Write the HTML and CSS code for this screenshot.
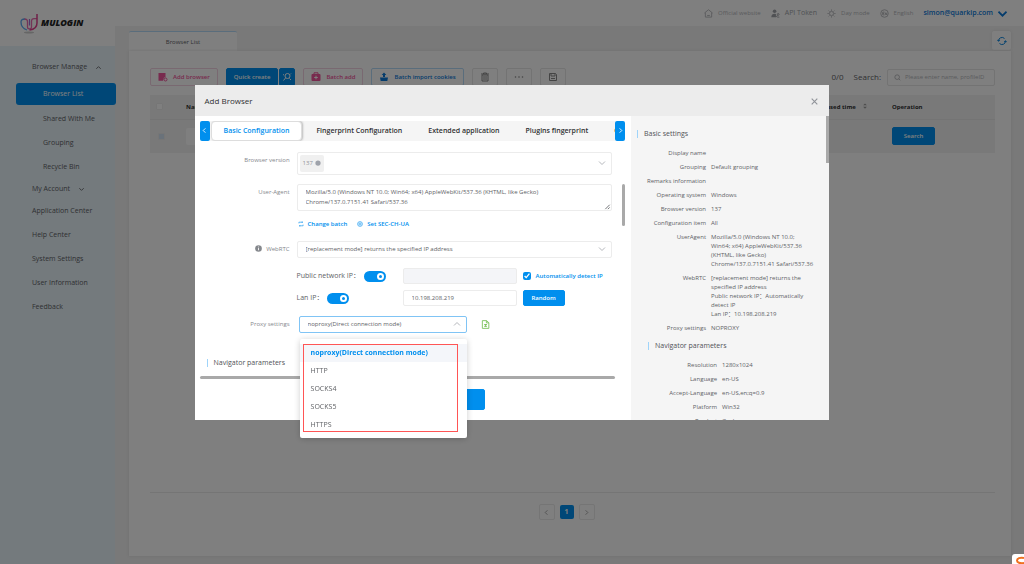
FILE: index.html
```html
<!DOCTYPE html>
<html lang="en">
<head>
    <meta charset="UTF-8">
    <meta name="viewport" content="width=device-width, initial-scale=1.0">
    <title>MuLogin - Browser List</title>
    <link rel="stylesheet" href="styles.css">
</head>
<body>

<div class="app">
    <!-- Sidebar -->
    <aside class="sidebar">
        <div class="logo">
            <svg width="18" height="21" viewBox="0 0 18 21" fill="none">
                <ellipse cx="9" cy="19.500" rx="5" ry="1" fill="#ccc" stroke="none"/>
                <path d="M5 6C2 6 1 7 1 9c0 4 3 7 6 8" stroke="#5aa9f5" stroke-width="1.300"/>
                <path d="M4.500 6c2.300 0 3 1 3 3v5c0 2.500 4 2.500 4 0V8.500c0-2 1-2.800 2.500-2.800h3" stroke="#e868ae" stroke-width="1.300"/>
                <path d="M17 1v9c0 4-3 6.500-7.500 7" stroke="#e0408f" stroke-width="1.500"/>
                <path d="M9.500 6v6.500" stroke="#a06bd8" stroke-width="1.200"/>
            </svg>
            <span>MULOGIN</span>
        </div>
        <nav class="menu">
            <a href="#" class="menu-item">Browser Manage
                <svg class="caret" viewBox="0 0 8 8"><path d="M1.500 5.500 4 3l2.500 2.500"/></svg>
            </a>
            <div class="submenu">
                <a href="#" class="menu-item active">Browser List</a>
                <a href="#" class="menu-item">Shared With Me</a>
                <a href="#" class="menu-item">Grouping</a>
                <a href="#" class="menu-item">Recycle Bin</a>
            </div>
            <a href="#" class="menu-item short">My Account
                <svg class="caret" viewBox="0 0 8 8"><path d="M1.500 2.500 4 5l2.500-2.500"/></svg>
            </a>
            <a href="#" class="menu-item">Application Center</a>
            <a href="#" class="menu-item">Help Center</a>
            <a href="#" class="menu-item">System Settings</a>
            <a href="#" class="menu-item">User Information</a>
            <a href="#" class="menu-item">Feedback</a>
        </nav>
    </aside>

    <div class="main">
        <!-- Top bar -->
        <header class="topbar">
            <a href="#"><svg viewBox="0 0 10 10"><path d="M.500 4.500 5 .800l4.500 3.700M1.500 4v5h7V4M3.500 7.200h3"/></svg>Official website</a>
            <a href="#" class="token"><svg viewBox="0 0 10 10"><g fill="currentColor" stroke="none"><circle cx="4" cy="2.500" r="2"/><path d="M.300 9.200C.300 6.500 2 5.300 4 5.300l1.500.300v3.600z"/></g><circle cx="8" cy="6" r="1"/><path d="M7.300 6.800 5.800 9M6.800 9h2.500"/></svg>API Token</a>
            <a href="#"><svg viewBox="0 0 10 10"><circle cx="5" cy="5" r="2.300"/><path d="M5 .500v1.500M5 8v1.500M.500 5H2M8 5h1.500M1.800 1.800l1 1M7.200 7.200l1 1M1.800 8.200l1-1M7.200 2.800l1-1"/></svg>Day mode</a>
            <a href="#"><svg viewBox="0 0 10 10"><circle cx="5" cy="5" r="4.200"/><path d="M3 3.500h2M3 5h1.500M3 6.500h2M3 3.500v3M6 6.500V4.200l1.500 2.300V4.200"/></svg>English</a>
            <a href="#" class="account">simon@quarkip.com<svg viewBox="0 0 10 10"><path d="M.500 3 5 7.500 9.500 3"/></svg></a>
        </header>

        <div class="page-tabs">
            <a href="#" class="page-tab">Browser List</a>
            <button class="refresh" aria-label="Refresh"><svg viewBox="0 0 10 10"><path d="M1.500 5a3.500 3.500 0 0 1 6-2.500M8.500 5a3.500 3.500 0 0 1-6 2.500M.300 3.800 1.500 5.300 2.900 4M9.700 6.200 8.500 4.700 7.100 6"/></svg></button>
        </div>

        <main class="panel">
            <!-- Toolbar -->
            <div class="toolbar">
                <button class="btn pink"><svg viewBox="0 0 10 10"><path fill="currentColor" stroke="none" d="M.500 1h7v4.500H6L5 8.800H.500z"/><circle cx="7.500" cy="7.500" r="1.500"/></svg>Add browser</button>
                <div class="btn-group">
                    <button class="btn blue">Quick create</button>
                    <button class="btn blue square" aria-label="Quick search"><svg viewBox="0 0 10 10"><circle cx="5.500" cy="4" r="2.500"/><path d="M3.500 6 1.500 8.500M7.500 6.500 9 8M1 2.500l1 .500M9 1.500l-1 1"/></svg></button>
                </div>
                <button class="btn pink"><svg viewBox="0 0 10 10"><path d="M3 2V.800h4V2"/><rect x=".500" y="2" width="9" height="7" rx="1" fill="currentColor" stroke="none"/><path d="M5 3.700v3.600M3.200 5.500h3.600" stroke="#fff"/></svg>Batch add</button>
                <button class="btn cookies"><svg viewBox="0 0 10 10"><g fill="currentColor" stroke="none"><path d="M1 5.500h8l-.700 3.500H1.700z"/><path d="M5 .500 7.300 3H6v2H4V3H2.700z"/></g></svg>Batch import cookies</button>
                <button class="btn icon-only" aria-label="Delete"><svg viewBox="0 0 10 10"><path d="M1 2h8M3.500 2V1h3v1M2 3v6h6V3zM4 4v4M6 4v4"/></svg></button>
                <button class="btn icon-only" aria-label="More"><svg viewBox="0 0 10 10"><g fill="currentColor" stroke="none"><circle cx="1.500" cy="5" r=".800"/><circle cx="5" cy="5" r=".800"/><circle cx="8.500" cy="5" r=".800"/></g></svg></button>
                <button class="btn icon-only" aria-label="Save"><svg viewBox="0 0 10 10"><path d="M1.500 1.500h6l1 1v6h-7zM3 1.500V4h4V1.500M3 6.500h4"/></svg></button>
                <div class="search">
                    <span>0/0</span>
                    <label for="search">Search:</label>
                    <div class="search-box">
                        <svg viewBox="0 0 10 10"><circle cx="4.500" cy="4.500" r="3.300"/><path d="m7 7 2 2"/></svg>
                        <input type="text" id="search" placeholder="Please enter name, profileID">
                    </div>
                </div>
            </div>

            <!-- Browser table -->
            <div class="table-wrap">
                <table>
                    <thead>
                        <tr>
                            <th class="col-check"><input type="checkbox" class="check" aria-label="Select all"></th>
                            <th>Name</th>
                            <th class="col-time">Last used time
                                <svg viewBox="0 0 8 8"><path d="M1.500 3 4 .500 6.500 3zM1.500 5 4 7.500 6.500 5z"/></svg>
                            </th>
                            <th class="col-op">Operation</th>
                        </tr>
                    </thead>
                    <tbody>
                        <tr>
                            <td><input type="checkbox" class="check tinted" aria-label="Select row"></td>
                            <td><input type="text" class="name-filter" aria-label="Name"></td>
                            <td></td>
                            <td><button class="btn blue row-search">Search</button></td>
                        </tr>
                    </tbody>
                </table>
            </div>

            <div class="pagination">
                <button aria-label="Previous"><svg viewBox="0 0 8 8"><path d="M5 1.500 2.500 4 5 6.500"/></svg></button>
                <button class="current">1</button>
                <button aria-label="Next"><svg viewBox="0 0 8 8"><path d="M3 1.500 5.500 4 3 6.500"/></svg></button>
            </div>
        </main>
    </div>
</div>

<!-- Add Browser dialog -->
<div class="overlay">
    <div class="dialog" role="dialog" aria-label="Add Browser">
        <div class="dialog-header">
            <h2>Add Browser</h2>
            <button class="close" aria-label="Close"><svg viewBox="0 0 8 8"><path d="m1.500 1.500 5 5M6.500 1.500l-5 5"/></svg></button>
        </div>

        <div class="dialog-body">
            <section class="config">
                <div class="config-tabs">
                    <button class="arrow" aria-label="Previous tab"><svg viewBox="0 0 8 8"><path d="M5 1.500 2.500 4 5 6.500"/></svg></button>
                    <div class="tab-list">
                        <button class="tab active">Basic Configuration</button>
                        <button class="tab">Fingerprint Configuration</button>
                        <button class="tab">Extended application</button>
                        <button class="tab">Plugins fingerprint</button>
                        <button class="tab">Other</button>
                    </div>
                    <button class="arrow" aria-label="Next tab"><svg viewBox="0 0 8 8"><path d="M3 1.500 5.500 4 3 6.500"/></svg></button>
                </div>

                <form class="form">
                    <div class="row">
                        <label class="row-label" for="version">Browser version</label>
                        <div class="field tall">
                            <span class="tag">137 <svg viewBox="0 0 8 8"><circle cx="4" cy="4" r="3.500"/></svg></span>
                            <select id="version"><option></option></select>
                            <svg class="chevron" viewBox="0 0 8 8"><path d="M1 2.500 4 5.500l3-3"/></svg>
                        </div>
                    </div>
                    <div class="row">
                        <label class="row-label" for="ua">User-Agent</label>
                        <div class="field area">
                            <textarea id="ua" rows="2">Mozilla/5.0 (Windows NT 10.0; Win64; x64) AppleWebKit/537.36 (KHTML, like Gecko) Chrome/137.0.7151.41 Safari/537.36</textarea>
                            <svg class="grip" viewBox="0 0 8 8"><path d="m1.500 7 5-5M4.500 7l2-2"/></svg>
                        </div>
                    </div>
                    <div class="links">
                        <a href="#"><svg viewBox="0 0 10 10"><path d="M1.500 4V2h6.500M8.500 6v2H2M7 .800v2.500M3 6.700v2.500"/></svg>Change batch</a>
                        <a href="#"><svg viewBox="0 0 10 10"><circle cx="5" cy="5" r="4"/><circle cx="5" cy="5" r="1.800"/></svg>Set SEC-CH-UA</a>
                    </div>
                    <div class="row webrtc">
                        <label class="row-label" for="webrtc"><svg viewBox="0 0 8 8"><circle cx="4" cy="4" r="3.800" fill="#85888d" stroke="none"/><path d="M4 3.500V6M4 1.800v.900" stroke="#fff"/></svg>WebRTC</label>
                        <div class="field">
                            <select id="webrtc"><option>[replacement mode] returns the specified IP address</option></select>
                            <svg class="chevron" viewBox="0 0 8 8"><path d="M1 2.500 4 5.500l3-3"/></svg>
                        </div>
                    </div>
                    <div class="ip-row">
                        <label class="switch-label">Public network IP：<input type="checkbox" class="switch" checked></label>
                        <input type="text" class="ip-input" aria-label="Public network IP" disabled>
                        <label class="auto"><input type="checkbox" checked>Automatically detect IP</label>
                    </div>
                    <div class="ip-row">
                        <label class="switch-label">Lan IP：<input type="checkbox" class="switch" checked></label>
                        <input type="text" class="ip-input" aria-label="Lan IP" value="10.198.208.219">
                        <button type="button" class="btn blue random">Random</button>
                    </div>
                    <div class="row proxy">
                        <label class="row-label" for="proxy">Proxy settings</label>
                        <div class="field open">
                            <select id="proxy"><option>noproxy(Direct connection mode)</option></select>
                            <svg class="chevron" viewBox="0 0 8 8"><path d="M1 5.500 4 2.500l3 3"/></svg>
                            <div class="dropdown">
                                <ul role="listbox">
                                    <li role="option" aria-selected="true" class="selected">noproxy(Direct connection mode)</li>
                                    <li role="option">HTTP</li>
                                    <li role="option">SOCKS4</li>
                                    <li role="option">SOCKS5</li>
                                    <li role="option">HTTPS</li>
                                </ul>
                                <div class="highlight"></div>
                            </div>
                        </div>
                        <svg class="doc" viewBox="0 0 10 10"><path d="M1.500.700h4.700L8.700 3v6.300H1.500zM6 .700V3.200h2.700M3.500 5h3.200M3.500 7h3.200M5.100 4.500v3"/></svg>
                    </div>
                    <h3 class="section-title">Navigator parameters</h3>
                    <div class="v-thumb"></div>
                </form>
                <div class="h-thumb"></div>
                <div class="actions">
                    <button class="btn blue confirm" aria-label="Confirm"></button>
                </div>
            </section>

            <!-- Summary -->
            <section class="summary">
                <h3 class="section-title">Basic settings</h3>
                <dl>
                    <dt>Display name</dt><dd></dd>
                    <dt>Grouping</dt><dd>Default grouping</dd>
                    <dt>Remarks information</dt><dd></dd>
                    <dt>Operating system</dt><dd>Windows</dd>
                    <dt>Browser version</dt><dd>137</dd>
                    <dt>Configuration item</dt><dd>All</dd>
                    <dt>UserAgent</dt><dd>Mozilla/5.0 (Windows NT 10.0; Win64; x64) AppleWebKit/537.36 (KHTML, like Gecko) Chrome/137.0.7151.41 Safari/537.36</dd>
                    <dt>WebRTC</dt><dd>[replacement mode] returns the specified IP address<br>Public network IP：Automatically detect IP<br>Lan IP：10.198.208.219</dd>
                    <dt>Proxy settings</dt><dd>NOPROXY</dd>
                </dl>
                <div class="nested">
                    <h3 class="section-title">Navigator parameters</h3>
                    <dl>
                        <dt>Resolution</dt><dd>1280x1024</dd>
                        <dt>Language</dt><dd>en-US</dd>
                        <dt>Accept-Language</dt><dd>en-US,en;q=0.9</dd>
                        <dt>Platform</dt><dd>Win32</dd>
                        <dt>Product</dt><dd>Gecko</dd>
                    </dl>
                </div>
                <div class="side-thumb"></div>
            </section>
        </div>
    </div>
</div>

<div class="float-badge">
    <svg viewBox="0 0 12 10"><path d="M12 4C8 3 5 4.500 5 6.500s3 3 7 2.500" fill="none" stroke="#f07020" stroke-width="2"/></svg>
</div>

</body>
</html>
```
FILE: styles.css
```css
/* Base */
*,
*::before {
    box-sizing: border-box;
}

body {
    font-family: "Open Sans", "Noto Sans CJK SC", sans-serif;
    font-size: 7px;
    line-height: 10px;
    margin: 0;
    color: #606266;
    background: #f2f2f2;
}

button, input, select, textarea {
    font: inherit;
    color: inherit;
    margin: 0;
    padding: 0;
    border: none;
    background: none;
    outline: none;
}

a {
    color: inherit;
    text-decoration: none;
}

h2, h3, dl, dd, ul {
    margin: 0;
    padding: 0;
    font-weight: 400;
}

svg {
    flex: none;
    width: 10px;
    height: 10px;
    fill: none;
    stroke: currentColor;
}

.app {
    display: flex;
    min-height: 100vh;
}

/* Sidebar */
.sidebar {
    flex: 0 0 115px;
    background: #e9f4fb;
}

.logo {
    display: flex;
    align-items: center;
    gap: 3px;
    height: 46px;
    padding-left: 20px;
    background: #fff;
    color: #222;
    font-size: 9px;
    font-weight: 800;
    font-style: italic;
}

.logo svg {
    width: 18px;
    height: 21px;
}

.menu {
    padding-top: 9px;
}

.menu-item {
    display: flex;
    align-items: center;
    gap: 8px;
    height: 24px;
    padding-left: 32px;
}

.menu-item.short {
    height: 20px;
}

.submenu {
    padding-top: 4px;
}

.submenu .menu-item {
    padding-left: 43px;
}

.submenu .menu-item.active {
    height: 22px;
    margin: 0 -1px 2px 16px;
    padding-left: 27px;
    border-radius: 3px;
    background: #008fee;
    color: #fff;
}

.caret {
    width: 7px;
    height: 7px;
}

/* Main column */
.main {
    flex: 1;
    display: flex;
    flex-direction: column;
    min-width: 0;
}

.topbar {
    display: flex;
    align-items: center;
    justify-content: flex-end;
    gap: 10px;
    height: 26px;
    padding-right: 17px;
    background: #fff;
    color: #b4b6ba;
    font-size: 6px;
}

.topbar a {
    display: flex;
    align-items: center;
    gap: 5px;
}

.topbar svg {
    width: 9px;
    height: 9px;
}

.topbar .token {
    color: #a0a3a8;
    font-size: 7px;
}

.topbar .account {
    color: #0a78d8;
    font-size: 7px;
    font-weight: 600;
}

.account svg {
    stroke-width: 2;
}

.page-tabs {
    display: flex;
    justify-content: space-between;
    height: 25px;
    padding: 5px 13px 0 14px;
}

.page-tab {
    display: flex;
    align-items: center;
    justify-content: center;
    width: 108px;
    border-top: 1px solid #b5dbf8;
    border-radius: 2px 2px 0 0;
    background: #fff;
    font-size: 6px;
}

.refresh {
    display: flex;
    align-items: center;
    justify-content: center;
    width: 19px;
    height: 19px;
    border-radius: 2px;
    background: #fff;
    color: #0a86e0;
    box-shadow: 0 0 3px #ddd;
}

.panel {
    flex: 1;
    display: flex;
    flex-direction: column;
    margin: 0 13px 8px 14px;
    padding: 17px 16px 36px 21px;
    background: #fff;
    box-shadow: 0 0 3px #ddd;
}

/* Toolbar */
.toolbar {
    display: flex;
    gap: 8px;
    margin-bottom: 9px;
}

.btn {
    display: flex;
    align-items: center;
    justify-content: center;
    gap: 5px;
    height: 18px;
    padding: 0 7px;
    border: 1px solid #e6e6e6;
    border-radius: 2px;
    font-size: 6px;
    font-weight: 600;
    white-space: nowrap;
}

.btn.pink {
    color: #f0559c;
    border-color: #f3d3e3;
}

.btn.blue {
    color: #fff;
    border-color: #008fee;
    background: #008fee;
}

.btn.cookies {
    color: #0a78d8;
    border-color: #b5dbf8;
}

.btn.icon-only {
    width: 26px;
    color: #888;
}

.btn-group {
    display: flex;
    gap: 1px;
}

.btn.square {
    width: 16px;
    padding: 0;
}

.search {
    display: flex;
    align-items: center;
    gap: 10px;
    margin-left: auto;
    font-size: 8px;
}

.search-box {
    display: flex;
    align-items: center;
    gap: 4px;
    width: 108px;
    height: 17px;
    margin-left: -4px;
    padding: 0 2px 0 6px;
    border: 1px solid #e6e6e6;
    border-radius: 2px;
    color: #a0a2a8;
    font-size: 6px;
}

.search-box svg {
    width: 7px;
    height: 7px;
}

.search-box input {
    flex: 1;
    min-width: 0;
}

::placeholder {
    color: #b5b7bc;
}

/* Table */
.table-wrap {
    flex: 1;
    border-bottom: 1px solid #ebebeb;
}

table {
    width: 100%;
    border-collapse: collapse;
    table-layout: fixed;
    background: #f3f3f3;
}

th, td {
    padding: 0 6px;
    text-align: left;
}

th {
    height: 24px;
    color: #303133;
    font-size: 6px;
    font-weight: 700;
    border-bottom: 1px solid #e8e8e8;
}

td {
    height: 34px;
}

.col-check {
    width: 30px;
}

.col-time {
    width: 80px;
}

.col-op {
    width: 109px;
}

.col-time svg {
    width: 6px;
    height: 6px;
    margin-left: 5px;
    fill: #999;
    stroke: none;
}

.check {
    display: block;
    appearance: none;
    width: 7px;
    height: 7px;
    background: #fff;
    border: 1px solid #ececec;
    border-radius: 1px;
}

.check.tinted {
    margin-left: 2px;
    background: #d5e5f5;
}

.name-filter {
    width: 70px;
    height: 17px;
    background: #fff;
    border-radius: 2px;
}

.row-search {
    width: 43px;
}

.pagination {
    display: flex;
    align-items: center;
    justify-content: center;
    gap: 5px;
    padding: 11px 12px 0 0;
}

.pagination button {
    display: flex;
    align-items: center;
    justify-content: center;
    width: 16px;
    height: 16px;
    border: 1px solid #eaeaea;
    border-radius: 2px;
    color: #999;
}

.pagination svg {
    width: 7px;
    height: 7px;
}

.pagination .current {
    width: 14px;
    height: 14px;
    border: none;
    background: #008fee;
    color: #fff;
    font-weight: 700;
}

/* Dialog */
.overlay {
    position: fixed;
    inset: 0;
    background: rgba(0, 0, 0, 0.5);
}

.dialog {
    width: 62%;
    margin: 15vh auto 0;
    background: #fff;
}

.dialog-header {
    display: flex;
    align-items: center;
    justify-content: space-between;
    height: 31px;
    padding: 2px 10px 0;
    background: #ececec;
}

.dialog-header h2 {
    font-size: 8px;
    color: #303133;
}

.close {
    display: flex;
    color: #909399;
}

.close svg {
    width: 9px;
    height: 9px;
}

.dialog-body {
    display: grid;
    grid-template-columns: 11fr 5fr;
    height: 54vh;
}

.config {
    min-width: 0;
    padding: 5px 6px 0 5px;
    font-size: 6px;
}

.config-tabs {
    display: flex;
    height: 20px;
    margin-bottom: 11px;
}

.arrow {
    display: flex;
    align-items: center;
    justify-content: center;
    flex: 0 0 10px;
    border-radius: 2px;
    background: #008fee;
    color: #fff;
}

.arrow svg {
    width: 7px;
    height: 7px;
}

.tab-list {
    flex: 1;
    display: flex;
    gap: 2px;
    padding-left: 1px;
    overflow: hidden;
    background: #f5f5f5;
}

.tab {
    flex: none;
    padding: 0 12px;
    color: #303133;
    font-size: 7px;
    font-weight: 600;
}

.tab.active {
    border: 1px solid #ddd;
    border-radius: 4px;
    background: #fff;
    color: #008fee;
    box-shadow: 1px 0 2px #bbb;
}

/* Form */
.form {
    position: relative;
    padding-right: 13px;
}

.row {
    display: flex;
    gap: 7px;
    margin-bottom: 9px;
}

.row-label {
    display: flex;
    justify-content: flex-end;
    gap: 4px;
    flex: 0 0 90px;
    height: 16px;
    align-items: center;
    color: #85888d;
}

.row-label svg {
    width: 7px;
    height: 7px;
}

.field {
    position: relative;
    flex: 1;
    display: flex;
    align-items: center;
    height: 17px;
    padding: 0 5px 0 8px;
    border: 1px solid #ececec;
    border-radius: 2px;
}

.field.tall {
    height: 23px;
    padding-left: 2px;
}

.field.area {
    height: 27px;
}

.field select {
    flex: 1;
    min-width: 0;
    appearance: none;
}

.field textarea {
    flex: 1;
    display: block;
    height: 20px;
    padding-right: 30px;
    resize: none;
    overflow: hidden;
}

.chevron {
    width: 8px;
    height: 8px;
    color: #b5b7bc;
}

.grip {
    position: absolute;
    right: 0;
    bottom: 0;
    width: 7px;
    height: 7px;
}

.tag {
    display: flex;
    align-items: center;
    gap: 2px;
    height: 17px;
    padding: 0 3px;
    border-radius: 2px;
    background: #f0f0f0;
    color: #909399;
}

.tag svg {
    width: 6px;
    height: 6px;
    fill: #9ea2aa;
    stroke: none;
}

.links {
    display: flex;
    gap: 10px;
    margin: -1px 0 12px 98px;
    color: #008fee;
    font-weight: 600;
}

.links a {
    display: flex;
    align-items: center;
    gap: 4px;
}

.links svg {
    width: 6px;
    height: 6px;
}

.row.webrtc {
    margin-bottom: 10px;
}

.ip-row {
    display: grid;
    grid-template-columns: 106px 114px auto;
    align-items: center;
    justify-content: start;
    height: 17px;
    margin: 0 0 5px 97px;
}

.switch-label {
    display: flex;
    align-items: center;
    gap: 4px;
    font-size: 7px;
}

.switch {
    appearance: none;
    display: flex;
    justify-content: flex-end;
    width: 22px;
    height: 11px;
    padding: 2px;
    border-radius: 6px;
    background: #008fee;
}

.switch::before {
    content: "";
    width: 7px;
    height: 7px;
    border: 2px solid #fff;
    border-radius: 50%;
}

.ip-input {
    height: 16px;
    padding-left: 8px;
    border: 1px solid #ececec;
    border-radius: 2px;
}

.ip-input:disabled {
    background: #f4f5f8;
}

.auto {
    display: flex;
    align-items: center;
    gap: 5px;
    margin-left: 6px;
    color: #008fee;
    font-weight: 600;
}

.auto input {
    width: 8px;
    height: 8px;
    accent-color: #008fee;
}

.random {
    width: 42px;
    height: 16px;
    margin-left: 6px;
}

.row.proxy {
    align-items: center;
    margin: 9px 0 25px;
}

.proxy .field {
    flex: 0 0 168px;
    margin-left: 2px;
}

.field.open {
    border-color: #80c4f5;
}

.doc {
    width: 9px;
    height: 9px;
    margin-left: 7px;
    color: #7cc25a;
}

.dropdown {
    position: absolute;
    z-index: 2;
    top: 22px;
    left: 0;
    right: -1px;
    height: 99px;
    padding: 5px 0 7px;
    border-radius: 2px;
    background: #fff;
    box-shadow: 0 1px 6px rgba(0, 0, 0, 0.2);
    font-size: 7px;
}

.dropdown ul {
    height: 87px;
    overflow: hidden;
    list-style: none;
}

.dropdown li {
    padding: 4px 11px;
}

.dropdown .selected {
    background: #f4f6fa;
    color: #008fee;
    font-weight: 700;
}

.highlight {
    position: absolute;
    top: 5px;
    left: 3px;
    right: 9px;
    height: 88px;
    border: 1px solid #f55;
}

.section-title {
    display: flex;
    align-items: center;
    gap: 6px;
    height: 10px;
    font-size: 7px;
    color: #505256;
}

.section-title::before {
    content: "";
    width: 1px;
    height: 8px;
    background: #9fd4fa;
}

.form .section-title {
    padding-left: 7px;
}

.v-thumb {
    position: absolute;
    top: 32px;
    right: 0;
    width: 3px;
    height: 42px;
    border-radius: 2px;
    background: #a9a9a9;
}

.h-thumb {
    height: 3px;
    margin: 8px 10px 0 0;
    border-radius: 2px;
    background: #a9a9a9;
}

.actions {
    display: flex;
    justify-content: center;
    padding-top: 10px;
}

.confirm {
    width: 145px;
    height: 21px;
}

/* Summary */
.summary {
    position: relative;
    padding: 13px 15px 0 6px;
    overflow: hidden;
    background: #f5f5f5;
    font-size: 6px;
    line-height: 9px;
}

.summary dl {
    display: grid;
    grid-template-columns: 69px 1fr;
    gap: 5px;
    margin: 10px 0 8px;
}

.summary dt {
    text-align: right;
}

.summary dd {
    min-height: 9px;
}

.nested {
    padding-left: 11px;
}

.side-thumb {
    position: absolute;
    top: 0;
    right: 0;
    width: 3px;
    height: 47px;
    background: #a9a9a9;
}

.float-badge {
    position: fixed;
    right: 0;
    bottom: 0;
    width: 12px;
    height: 10px;
    border-radius: 3px 0 0 0;
    background: #fff;
}

.float-badge svg {
    display: block;
    width: 12px;
}
```
